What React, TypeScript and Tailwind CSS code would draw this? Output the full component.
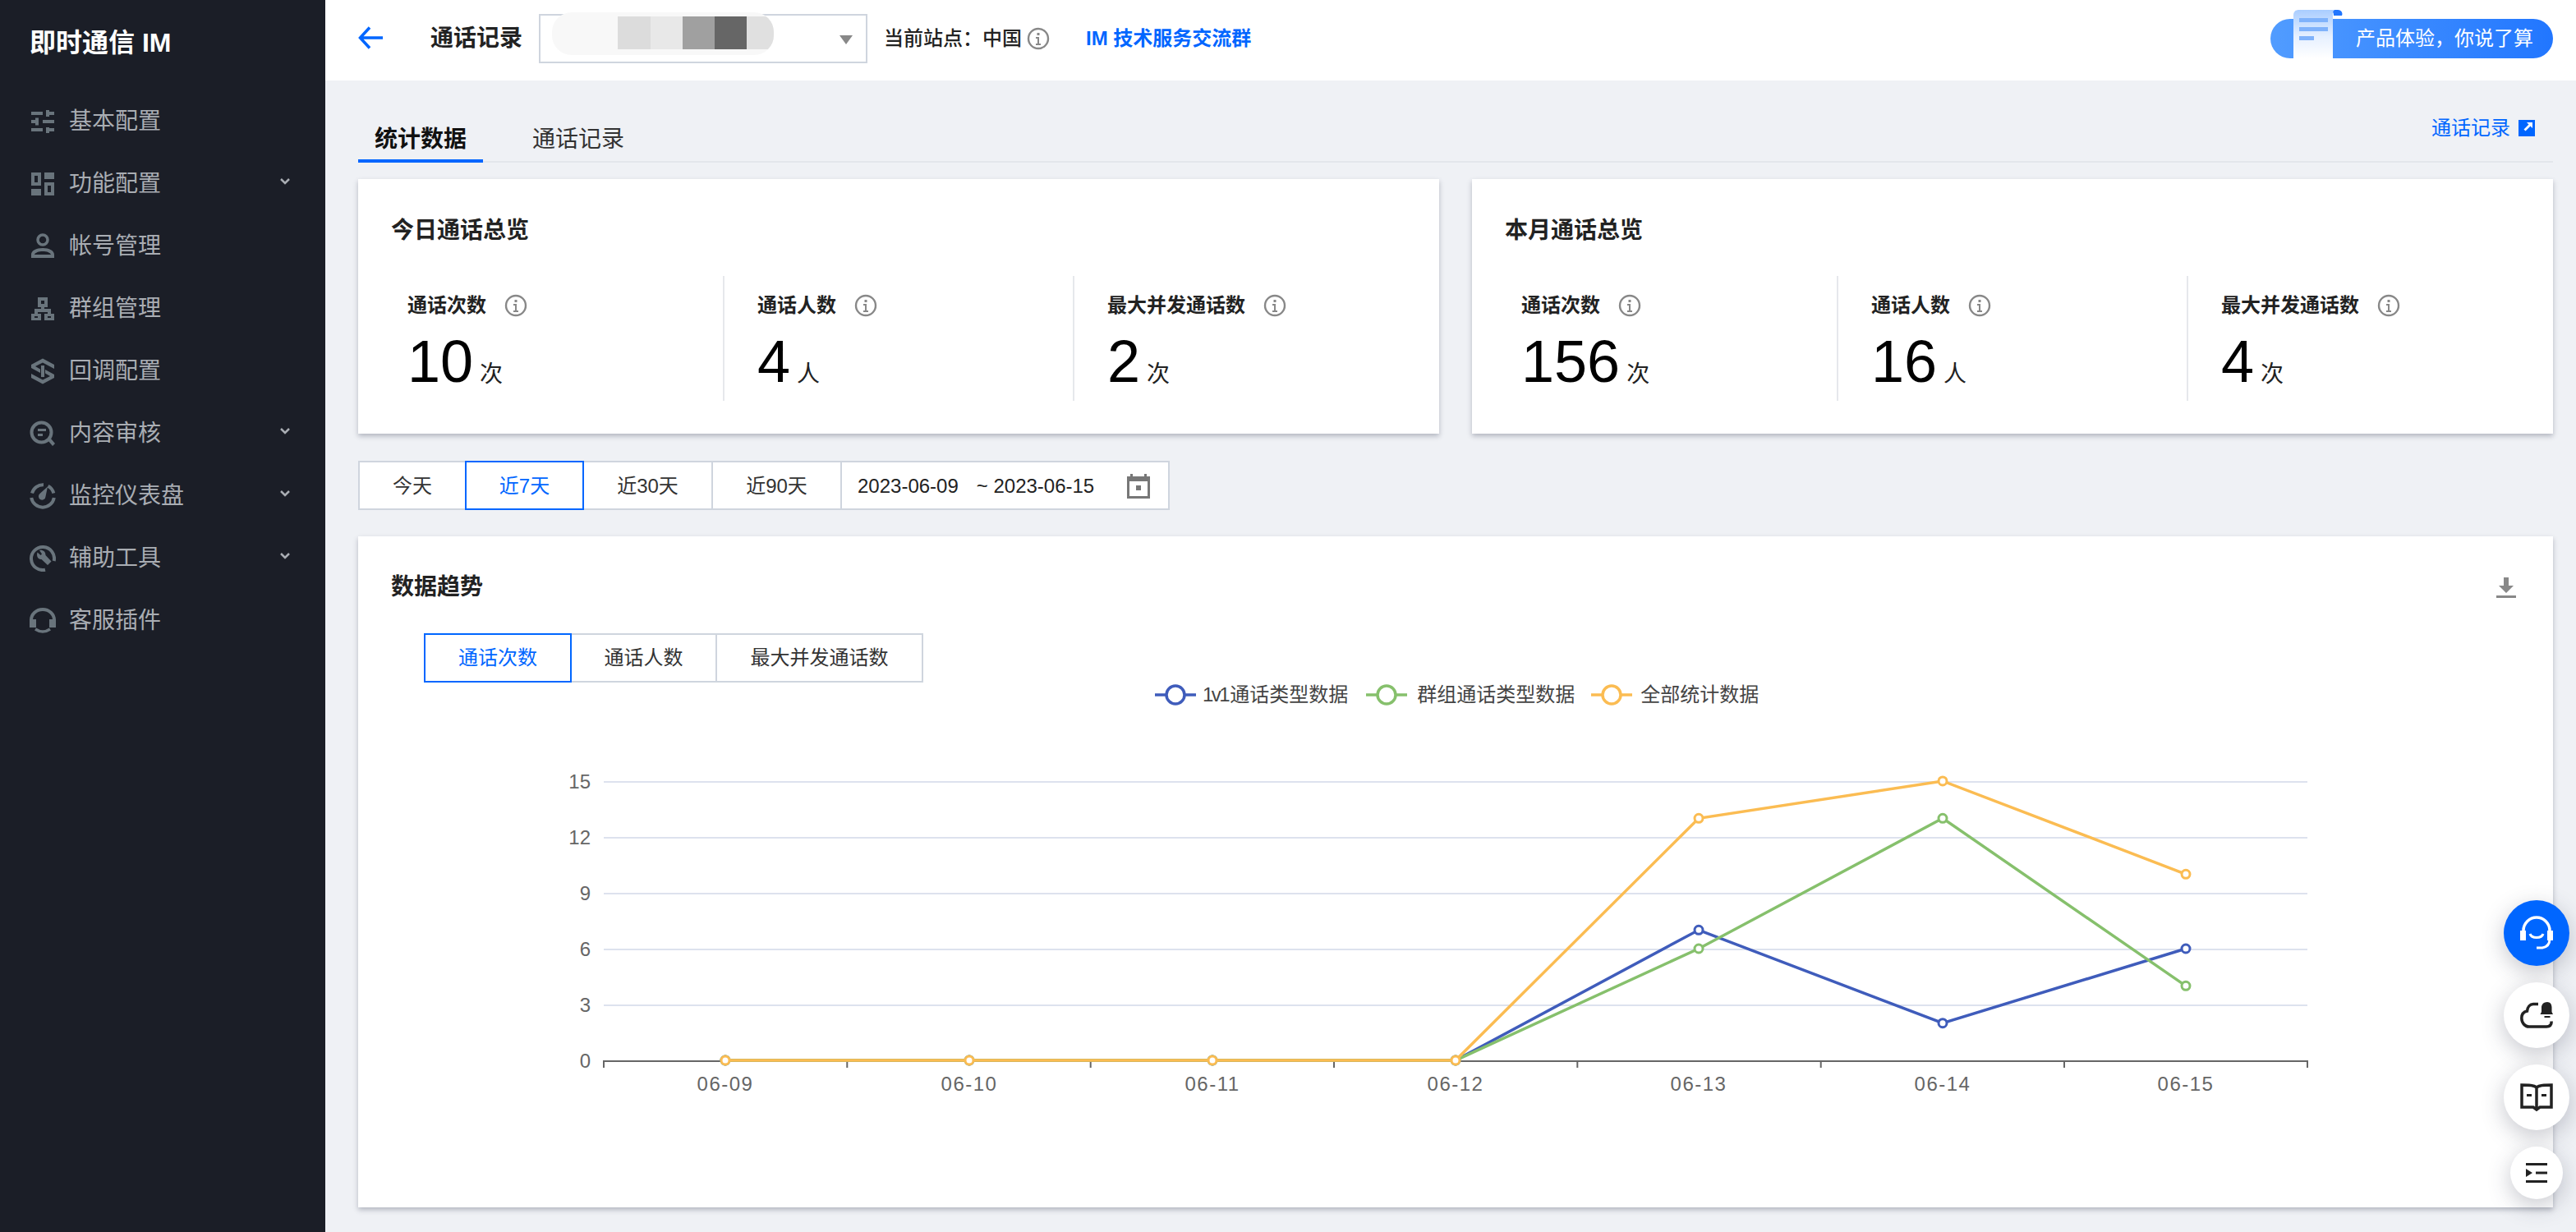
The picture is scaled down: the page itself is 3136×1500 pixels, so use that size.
import type { ReactNode } from "react";

const g = "#69747c";

function Ico({ children }: { children: ReactNode }) {
  return (
    <svg width="32" height="32" viewBox="0 0 32 32" fill={g} className="shrink-0">
      {children}
    </svg>
  );
}

const navItems: { label: string; arrow?: boolean; icon: ReactNode }[] = [
  {
    label: "基本配置",
    icon: (
      <Ico>
        <path d="M2 4h14v4H2zM20 2h4v2h6v4h-6v2h-4zM2 14h5v-2.500h4v9H7V18H2zM16 14h14v4H16zM2 24h14v4H2zM20 23h4v1h6v4h-6v2h-4z" />
      </Ico>
    ),
  },
  {
    label: "功能配置",
    arrow: true,
    icon: (
      <Ico>
        <path
          fillRule="evenodd"
          d="M2 2h12v16H2zM6 6v8h4V6zM18 2h12v8H18zM2 22h12v8H2zM18 14h12v16H18zM22 18v8h4v-8z"
        />
      </Ico>
    ),
  },
  {
    label: "帐号管理",
    icon: (
      <Ico>
        <circle cx="16" cy="8" r="6" fill="none" stroke={g} strokeWidth="3.500" />
        <path
          fillRule="evenodd"
          d="M16 18c8 0 14 3 14 8v4H2v-4c0-5 6-8 14-8zm0 4c-5 0-9 1.500-10 4h20c-1-2.500-5-4-10-4z"
        />
      </Ico>
    ),
  },
  {
    label: "群组管理",
    icon: (
      <Ico>
        <path
          fillRule="evenodd"
          d="M10 2h12v12h-4v2h8v6h4v8H18v-8h4v-2H10v2h4v8H2v-8h4v-6h8v-2h-4zM14 6v4h4V6zM6 25v2h4v-2zM22 25v2h4v-2z"
        />
      </Ico>
    ),
  },
  {
    label: "回调配置",
    icon: (
      <Ico>
        <path d="M16 .5L30 8v5L16 5.500 7 10l6 3.500V18L2 12V8zM16 31.500L2 24v-5l14 7.500 9-4.500-6-3.500V14l11 6v4z" />
        <path d="M14 9h4v14h-4z" />
      </Ico>
    ),
  },
  {
    label: "内容审核",
    arrow: true,
    icon: (
      <Ico>
        <circle cx="14.500" cy="14.500" r="12" fill="none" stroke={g} strokeWidth="4" />
        <path d="M22.500 24.500l3-3L31 28l-3 3zM10 10h10v3H10zM10 16h6v3h-6z" />
      </Ico>
    ),
  },
  {
    label: "监控仪表盘",
    arrow: true,
    icon: (
      <Ico>
        <path
          d="M3 12.500A14 14 0 0 1 17 2.200M22.500 3.800A14 14 0 0 1 29.300 12.500M2.200 18A14 14 0 0 0 29.800 18"
          fill="none"
          stroke={g}
          strokeWidth="4"
        />
        <path d="M22 4.500l-2.500 12a4.300 4.300 0 1 1-7-3.500z" />
      </Ico>
    ),
  },
  {
    label: "辅助工具",
    arrow: true,
    icon: (
      <Ico>
        <path d="M19 29.700A14 14 0 1 1 29.700 19" fill="none" stroke={g} strokeWidth="4" />
        <path d="M9.500 8.500l4 3.500 1.500-1.500-3-4.500c4-.8 7.500 1.500 7.500 6l7 7.500-4.500 4.500-7.500-7c-4 .5-6.500-3.500-5-8.500z" />
      </Ico>
    ),
  },
  {
    label: "客服插件",
    icon: (
      <Ico>
        <path d="M2 15a14 13 0 0 1 28 0" fill="none" stroke={g} strokeWidth="4" />
        <path d="M0 14h8v10H0zM24 14h8v10h-8z" />
        <path d="M7 26q9 6 18 0" fill="none" stroke={g} strokeWidth="3.500" />
      </Ico>
    ),
  },
];

function InfoIcon({ className }: { className?: string }) {
  return (
    <svg width="28" height="28" viewBox="0 0 28 28" fill="none" className={className}>
      <circle cx="14" cy="14" r="12" stroke="#888" strokeWidth="2.400" />
      <rect x="12.500" y="7" width="3" height="3" fill="#888" />
      <path d="M11 12h4v8h2v2h-6v-2h2v-6h-2z" fill="#888" />
    </svg>
  );
}

function Sidebar() {
  return (
    <aside className="w-[396px] shrink-0 bg-[#1b1e27] pl-[36px] pr-[42px]">
      <div className="h-[104px] pt-[32px] text-[32px] leading-[40px] font-bold text-white">即时通信 IM</div>
      <nav className="mt-[6px]">
        {navItems.map((item) => (
          <div key={item.label} className="flex h-[76px] items-center">
            {item.icon}
            <span className="ml-[16px] flex-1 text-[28px] leading-[40px] text-[#a9adb3]">{item.label}</span>
            {item.arrow && (
              <svg width="14" height="10" viewBox="0 0 14 10" fill="none" className="-mt-[6px]">
                <path d="M2 2l5 5 5-5" stroke="#a9adb3" strokeWidth="2.500" />
              </svg>
            )}
          </div>
        ))}
      </nav>
    </aside>
  );
}

function Header() {
  return (
    <header className="flex h-[98px] shrink-0 items-center bg-white pb-[4px] pl-[40px] pr-[28px]">
      <svg width="30" height="28" viewBox="0 0 30 28" fill="none" className="-mt-[2px]">
        <path d="M14 1.500L2.500 14 14 26.500M2.500 14H30" stroke="#0066ff" strokeWidth="3.500" />
      </svg>
      <span className="ml-[58px] text-[28px] leading-[40px] font-semibold text-[#222]">通话记录</span>
      <div className="relative ml-[20px] flex h-[60px] w-[400px] items-center justify-end border-2 border-[#cfd5de] pr-[16px]">
        <div className="absolute -top-[4px] left-[14px] flex h-[52px] w-[270px] items-start overflow-hidden rounded-[24px] bg-[#f8f8f8] pl-[80px] pt-[5px]">
          <div className="h-[40px] w-[40px] bg-[#dcdcdc]" />
          <div className="h-[40px] w-[39px] bg-[#e8e8e8]" />
          <div className="h-[40px] w-[39px] bg-[#a0a0a0]" />
          <div className="h-[40px] w-[39px] bg-[#666666]" />
          <div className="h-[40px] w-[33px] bg-[#e0e0e0]" />
        </div>
        <svg width="16" height="14" viewBox="0 0 16 14" className="mt-[2px]">
          <path d="M0 2h16L8 13z" fill="#888" />
        </svg>
      </div>
      <span className="ml-[20px] text-[24px] leading-[36px] font-medium text-[#222]">当前站点：中国</span>
      <InfoIcon className="ml-[6px]" />
      <span className="ml-[44px] text-[24px] leading-[36px] font-semibold text-[#0066ff]">IM 技术服务交流群</span>
      <div className="relative ml-auto flex h-[48px] w-[344px] items-center justify-end rounded-full bg-gradient-to-r from-[#519cff] to-[#2176ff] pr-[24px]">
        <svg width="62" height="62" viewBox="0 0 62 62" className="absolute bottom-0 left-[28px]">
          <defs>
            <linearGradient id="doc" x1="0" y1="0" x2="0" y2="1">
              <stop offset="0" stopColor="#a9cdff" />
              <stop offset="0.550" stopColor="#e6f0ff" />
              <stop offset="1" stopColor="#ffffff" />
            </linearGradient>
          </defs>
          <path d="M48 3h-5a6 6 0 0 1 6 6v1h10a5 5 0 0 0-5-7z" fill="#2176ff" />
          <path d="M6 3h44a6 6 0 0 0-2 6v53H0V9a6 6 0 0 1 6-6z" fill="url(#doc)" />
          <path d="M7 13h35v5H7zM7 24h35v5H7zM7 35h18v5H7z" fill="#7fb2fb" />
        </svg>
        <span className="text-[24px] leading-[36px] text-white">产品体验，你说了算</span>
      </div>
    </header>
  );
}

function Stat({ label, value, unit }: { label: string; value: string; unit: string }) {
  return (
    <div className="flex-1 border-r-2 border-[#e6e8ec] pl-[40px] last:border-r-0">
      <div className="flex h-[62px] items-center pt-[10px]">
        <span className="text-[24px] leading-[36px] font-semibold text-[#222]">{label}</span>
        <InfoIcon className="ml-[22px]" />
      </div>
      <div className="flex items-baseline">
        <span className="text-[72px] leading-[84px] text-black">{value}</span>
        <span className="ml-[8px] text-[28px] leading-[40px] text-[#222]">{unit}</span>
      </div>
    </div>
  );
}

function SummaryCard({ title, values }: { title: string; values: string[] }) {
  return (
    <section className="h-[310px] flex-1 bg-white px-[20px] pt-[43px] shadow-[0_3px_6px_rgba(54,58,80,0.32)]">
      <h3 className="pl-[20px] text-[28px] leading-[40px] font-semibold text-[#222]">{title}</h3>
      <div className="mt-[35px] flex h-[152px]">
        <Stat label="通话次数" value={values[0]} unit="次" />
        <Stat label="通话人数" value={values[1]} unit="人" />
        <Stat label="最大并发通话数" value={values[2]} unit="次" />
      </div>
    </section>
  );
}

function DateFilter() {
  return (
    <div className="mt-[33px] flex h-[60px] w-[988px] text-[24px] leading-[36px] text-[#333]">
      <div className="flex w-[130px] items-center justify-center border-2 border-r-0 border-[#cfd5de] bg-white pt-[2px]">今天</div>
      <div className="flex w-[145px] items-center justify-center border-2 border-[#0066ff] bg-white pt-[2px] text-[#0066ff]">近7天</div>
      <div className="flex w-[157px] items-center justify-center border-y-2 border-r-2 border-[#cfd5de] bg-white pt-[2px]">近30天</div>
      <div className="flex w-[157px] items-center justify-center border-y-2 border-r-2 border-[#cfd5de] bg-white pt-[2px]">近90天</div>
      <div className="flex flex-1 items-center border-y-2 border-r-2 border-[#cfd5de] bg-white pl-[19px] pr-[22px] pt-[2px] text-[#222]">
        <span>2023-06-09</span>
        <span className="ml-[22px]">~ 2023-06-15</span>
        <svg width="28" height="30" viewBox="0 0 28 30" className="ml-auto">
          <path fillRule="evenodd" d="M4 0h3v3h14V0h3v3h4v27H0V3h4zM3 9v18h22V9zM11 14h6v6h-6z" fill="#777" />
        </svg>
      </div>
    </div>
  );
}

const xs = [883, 1180, 1476, 1772, 2068, 2365, 2661];
const dates = ["06-09", "06-10", "06-11", "06-12", "06-13", "06-14", "06-15"];
const ticks = [735, 1031.3, 1327.7, 1624, 1920.3, 2216.7, 2513, 2809];
const yOf = (v: number) => 1291 - v * 22.67;

const series = [
  { color: "#3f5cbb", data: [0, 0, 0, 0, 7, 2, 6] },
  { color: "#86c06c", data: [0, 0, 0, 0, 6, 13, 4] },
  { color: "#fbbc52", data: [0, 0, 0, 0, 13, 15, 10] },
];

function LegendMark({ color }: { color: string }) {
  return (
    <svg width="50" height="28" viewBox="0 0 50 28" fill="none">
      <path d="M0 14h50" stroke={color} strokeWidth="3.500" />
      <circle cx="25" cy="14" r="11" fill="#fff" stroke={color} strokeWidth="3.500" />
    </svg>
  );
}

function TrendChart() {
  return (
    <svg width="2672" height="560" viewBox="436 870 2672 560" className="mt-[9px] block">
      {[15, 12, 9, 6, 3].map((v) => (
        <line key={v} x1="735" x2="2809" y1={yOf(v) + 1} y2={yOf(v) + 1} stroke="#dde2ee" strokeWidth="2" />
      ))}
      {[15, 12, 9, 6, 3, 0].map((v) => (
        <text key={v} x="719" y={yOf(v) + 9} textAnchor="end" fontSize="24" fill="#666">
          {v}
        </text>
      ))}
      <line x1="734" x2="2810" y1="1292" y2="1292" stroke="#666" strokeWidth="2" />
      {ticks.map((x) => (
        <line key={x} x1={x} x2={x} y1="1292" y2="1300" stroke="#666" strokeWidth="2" />
      ))}
      {dates.map((d, i) => (
        <text key={d} x={xs[i]} y="1328" textAnchor="middle" fontSize="24" letterSpacing="1.500" fill="#666">
          {d}
        </text>
      ))}
      {series.map((s) => (
        <g key={s.color}>
          <polyline
            points={s.data.map((v, i) => `${xs[i]},${yOf(v)}`).join(" ")}
            fill="none"
            stroke={s.color}
            strokeWidth="3.500"
          />
          {s.data.map((v, i) => (
            <circle key={i} cx={xs[i]} cy={yOf(v)} r="5" fill="#fff" stroke={s.color} strokeWidth="3" />
          ))}
        </g>
      ))}
    </svg>
  );
}

function ChartCard() {
  return (
    <section className="mt-[32px] h-[817px] bg-white shadow-[0_3px_6px_rgba(54,58,80,0.32)]">
      <div className="flex items-center justify-between pl-[40px] pr-[44px] pt-[42px]">
        <h3 className="text-[28px] leading-[40px] font-semibold text-[#222]">数据趋势</h3>
        <svg width="26" height="28" viewBox="0 0 26 28">
          <path d="M10 2h6v10h6l-9 9-9-9h6zM1 24h24v3H1z" fill="#888" />
        </svg>
      </div>
      <div className="ml-[80px] mt-[36px] flex h-[60px] w-[608px] text-[24px] leading-[36px] text-[#333]">
        <div className="flex w-[180px] items-center justify-center border-2 border-[#0066ff] text-[#0066ff]">通话次数</div>
        <div className="flex w-[177px] items-center justify-center border-y-2 border-r-2 border-[#cfd5de]">通话人数</div>
        <div className="flex flex-1 items-center justify-center border-y-2 border-r-2 border-[#cfd5de]">最大并发通话数</div>
      </div>
      <div className="flex h-[30px] items-center pl-[970px] text-[24px] leading-[36px] text-[#444]">
        <LegendMark color="#3f5cbb" />
        <span className="ml-[8px]">
          <span className="tracking-[-2.500px]">1v1</span>
          <span className="ml-[2px]">通话类型数据</span>
        </span>
        <span className="ml-[22px]">
          <LegendMark color="#86c06c" />
        </span>
        <span className="ml-[12px]">群组通话类型数据</span>
        <span className="ml-[20px]">
          <LegendMark color="#fbbc52" />
        </span>
        <span className="ml-[10px]">全部统计数据</span>
      </div>
      <TrendChart />
    </section>
  );
}

function FloatButtons() {
  const shadow = "shadow-[0_8px_28px_rgba(54,58,80,0.28)]";
  return (
    <div className="absolute right-[8px] top-[1096px] flex w-[80px] flex-col items-center gap-[20px]">
      <div className={`flex h-[80px] w-[80px] items-center justify-center rounded-full bg-[#0066ff] ${shadow}`}>
        <svg width="42" height="42" viewBox="0 0 42 42" fill="none">
          <path d="M5 18a16 16 0 0 1 32 0" stroke="#fff" strokeWidth="3.500" />
          <path d="M1 18h7v12H1zM34 18h7v12h-7z" fill="#fff" />
          <path d="M13 22c2 6 14 6 16 0" stroke="#fff" strokeWidth="3" />
          <path d="M37 28c0 7-3 10-9 11h-7" stroke="#fff" strokeWidth="3" />
        </svg>
      </div>
      <div className={`flex h-[80px] w-[80px] items-center justify-center rounded-full bg-white ${shadow}`}>
        <svg width="40" height="32" viewBox="0 0 40 32" fill="none">
          <path
            d="M22 2.500h-6C12 2.500 9 6 8.500 11 4 12 1.800 15.500 1.800 19.500c0 6 4 10.500 9 10.500H32c4 0 6.200-2.500 6.200-6.500"
            stroke="#222"
            strokeWidth="3.500"
          />
          <path d="M33 0c3.500 0 5.500 2.800 5.500 6.500V12l1.500 3H24.500l1.500-3V6.500C26 2.800 29 0 33 0zM29.500 17h7v2h-7z" fill="#222" />
        </svg>
      </div>
      <div className={`flex h-[80px] w-[80px] items-center justify-center rounded-full bg-white ${shadow}`}>
        <svg width="40" height="34" viewBox="0 0 40 34" fill="none">
          <path d="M20 5C17 2 10 2 2 2v27h14l4 3 4-3h14V2c-8 0-15 0-18 3zM20 5v25" stroke="#222" strokeWidth="3.500" />
          <path d="M8 13h6v3H8zM26 13h6v3h-6z" fill="#222" />
        </svg>
      </div>
      <div className={`flex h-[64px] w-[64px] items-center justify-center rounded-full bg-white ${shadow}`}>
        <svg width="26" height="24" viewBox="0 0 26 24">
          <path d="M0 0h26v3H0zM0 21h26v3H0zM12 10.500h14v3H12zM0 7l8 5-8 5z" fill="#222" />
        </svg>
      </div>
    </div>
  );
}

export default function App() {
  return (
    <div className="relative flex h-[1500px] w-[3136px] overflow-hidden bg-[#eff1f5] [font-family:'Liberation_Sans','Noto_Sans_CJK_SC',sans-serif]">
      <Sidebar />
      <main className="flex min-w-0 flex-1 flex-col">
        <Header />
        <div className="pl-[40px] pr-[28px]">
          <div className="relative flex h-[100px] items-end border-b-2 border-[#e3e6eb]">
            <div className="-mb-[2px] h-[66px] w-[152px] border-b-4 border-[#0066ff] pt-[18px] text-center text-[28px] leading-[40px] font-semibold text-[#111]">
              统计数据
            </div>
            <div className="ml-[60px] h-[64px] pt-[18px] text-[28px] leading-[40px] text-[#333]">通话记录</div>
            <div className="mb-[20px] ml-auto mr-[22px] flex h-[40px] items-center self-end text-[24px] leading-[36px] text-[#0066ff]">
              通话记录
              <svg width="20" height="20" viewBox="0 0 20 20" className="ml-[10px]">
                <path d="M0 0h20v20H0z" fill="#0066ff" />
                <path d="M10 3h7v7l-2.500-2.500-6 6-2-2 6-6z" fill="#fff" />
              </svg>
            </div>
          </div>
          <div className="mt-[20px] flex gap-[40px]">
            <SummaryCard title="今日通话总览" values={["10", "4", "2"]} />
            <SummaryCard title="本月通话总览" values={["156", "16", "4"]} />
          </div>
          <DateFilter />
          <ChartCard />
        </div>
      </main>
      <FloatButtons />
    </div>
  );
}
